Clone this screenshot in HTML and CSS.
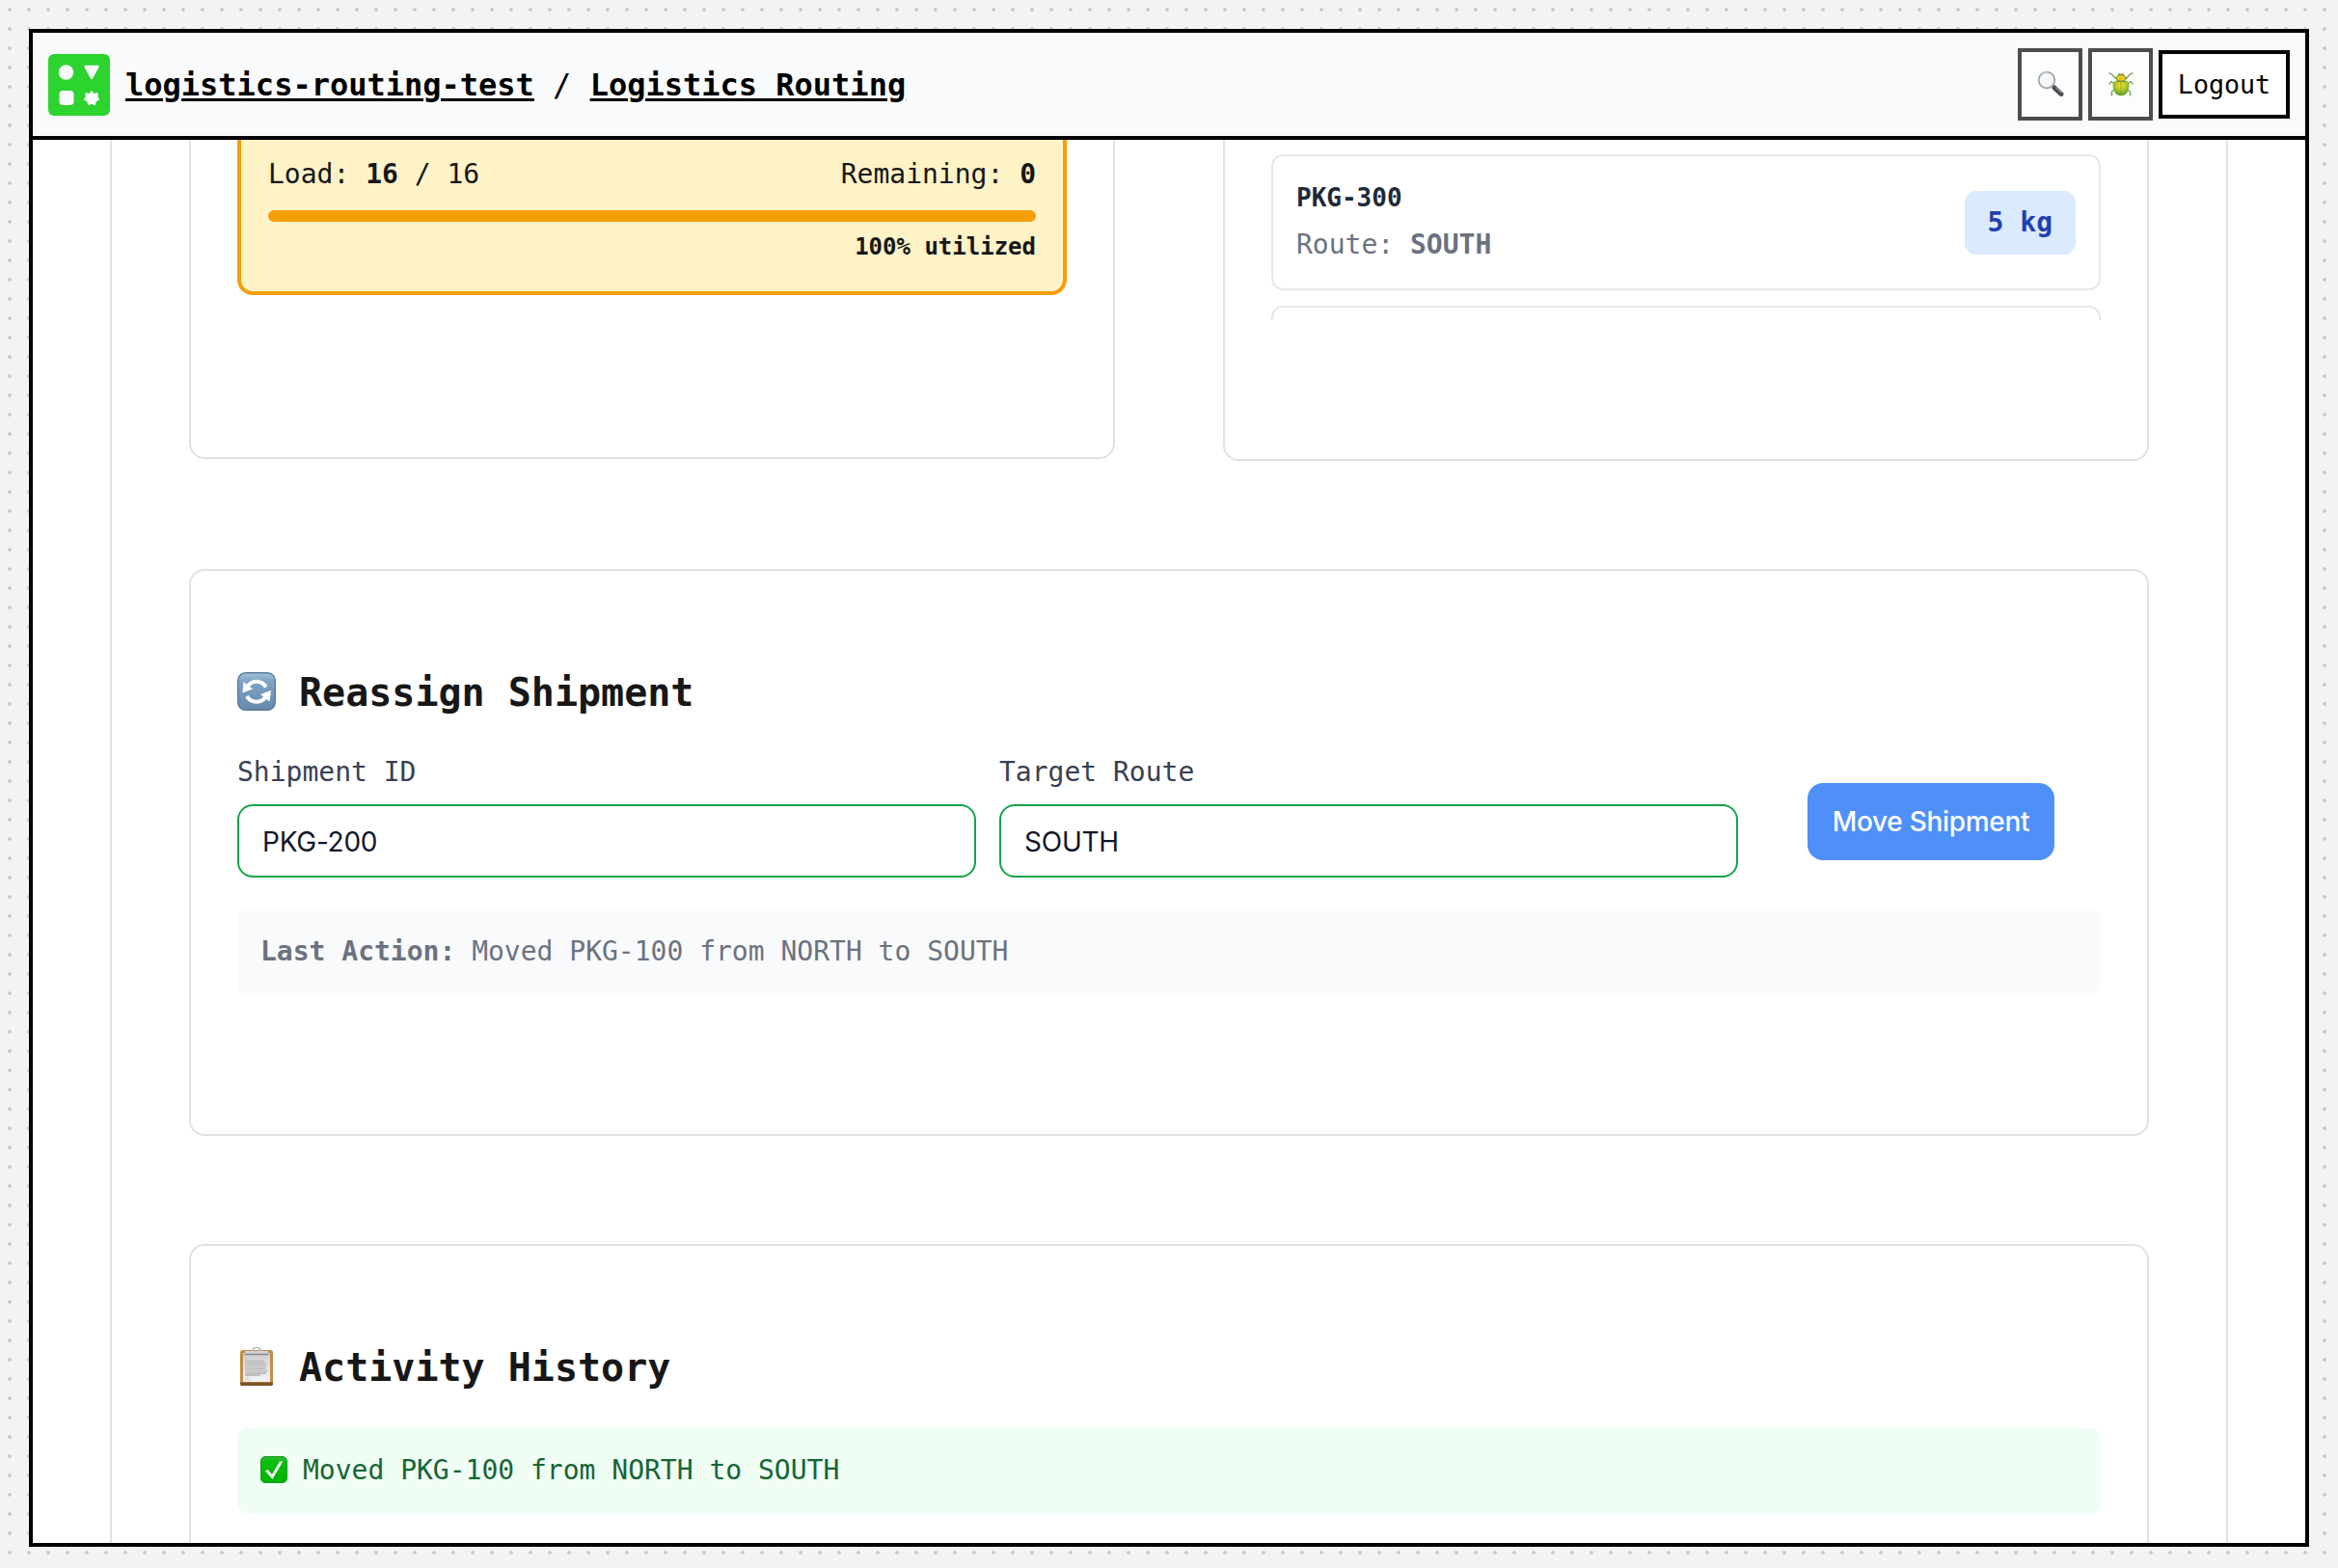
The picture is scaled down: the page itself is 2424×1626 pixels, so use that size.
FILE: index.html
```html
<!DOCTYPE html>
<html lang="en">
<head>
<meta charset="utf-8">
<title>Logistics Routing</title>
<link rel="stylesheet" href="styles.css">
</head>
<body>
<div class="frame">
  <header class="topbar">
    <svg class="logo" viewBox="0 0 64 64">
      <rect width="64" height="64" rx="6" fill="#2dd42f"/>
      <g fill="#f9fafc">
        <circle cx="18.5" cy="19" r="7.7"/>
        <path d="M38.6 13H51.4L45 25Z" stroke="#f9fafc" stroke-width="2.5" stroke-linejoin="round"/>
        <rect x="11.5" y="38" width="15" height="15" rx="4"/>
        <path d="M45 38.4L47.4 41.5L51.1 40.6L51.1 44.3L52.6 47.2L49.3 49L48.3 52.8L45 51.3L41.7 52.8L40.7 49L37.4 47.2L39.2 44.3L38.9 40.6L42.6 41.5Z" stroke="#f9fafc" stroke-width="1" stroke-linejoin="round"/>
      </g>
    </svg>
    <nav class="crumbs"><a>logistics-routing-test</a><span> / </span><a>Logistics Routing</a></nav>
    <div class="actions">
      <button class="icon-btn" aria-label="Search">
        <svg width="28" height="28" viewBox="0 0 28 28">
          <path d="M18 18L25 24.5" stroke="#454950" stroke-width="5" stroke-linecap="round"/>
          <path d="M19.5 17.8L25.3 23" stroke="#92969d" stroke-width="1.2" stroke-linecap="round"/>
          <circle cx="10" cy="10" r="8.3" fill="#f5f6f8" stroke="#9da3aa" stroke-width="1.7"/>
          <path d="M3.6 6.8A7.6 7.6 0 0 1 11 2.2" fill="none" stroke="#bfd3e6" stroke-width="1.2"/>
        </svg>
      </button>
      <button class="icon-btn" aria-label="Bugs">
        <svg width="28" height="28" viewBox="0 0 28 28">
          <defs><radialGradient id="shell" cx=".5" cy=".3" r=".7"><stop offset="0" stop-color="#f6dc25"/><stop offset=".45" stop-color="#b9cb2b"/><stop offset="1" stop-color="#4b9b2b"/></radialGradient></defs>
          <path d="M10 9C5 7 7 4 2 3M18 9C23 7 21 4 26 3M6 13L4 11.5L2 14M22 13L24 11.5L26 14M7 20L4.500 22L4.500 26M21 20L23.500 22L23.500 26" fill="none" stroke="#83a56b" stroke-width="1.5" stroke-linecap="round" stroke-linejoin="round"/>
          <path d="M11 6L11.500 3L14 4L16.500 3L17 6Z" fill="#578a27"/>
          <ellipse cx="14" cy="8" rx="5" ry="3.600" fill="#e6c71d" stroke="#57912a" stroke-width="1"/>
          <path d="M6 15C6 11 9 11 14 11S22 11 22 15C22 22 19 26 14 26S6 22 6 15Z" fill="url(#shell)" stroke="#73a52f" stroke-width=".7"/>
          <path d="M9 11.300H19" stroke="#5f8a22" stroke-width=".9"/>
          <path d="M14 11V25.500" stroke="#8f9920" stroke-width=".8"/>
        </svg>
      </button>
      <button class="logout">Logout</button>
    </div>
  </header>
  <main class="page">
    <div class="columns">
      <section class="card routes">
        <div class="route">
          <div class="route-row"><span>Load: <b>16</b> / 16</span><span>Remaining: <b>0</b></span></div>
          <div class="bar"></div>
          <div class="utilized">100% utilized</div>
        </div>
      </section>
      <section class="card packages">
        <div class="package-list">
          <div class="package">
            <div>
              <div class="package-id">PKG-300</div>
              <div class="package-route">Route: <b>SOUTH</b></div>
            </div>
            <span class="weight">5 kg</span>
          </div>
          <div class="package"></div>
        </div>
      </section>
    </div>
    <section class="card reassign">
      <h2>
        <svg width="40" height="40" viewBox="0 0 40 40">
          <defs><linearGradient id="blue" x2="0" y2="1"><stop offset="0" stop-color="#a7c2dc"/><stop offset=".22" stop-color="#7ea4c6"/><stop offset="1" stop-color="#6689aa"/></linearGradient></defs>
          <rect x=".7" y=".7" width="38.600" height="38.600" rx="8" fill="url(#blue)" stroke="#587c9d" stroke-width="1.400"/>
          <path d="M9.500 17.500C13 7.500 25 7.500 29.800 15.500M30.500 23C27 33 14.500 33 10 25" fill="none" stroke="#fff" stroke-width="4"/>
          <path d="M6.500 10L5.500 21.500L16 17.500ZM33.500 30.500L35 19L24 23Z" fill="#fff"/>
        </svg>
        Reassign Shipment
      </h2>
      <form class="form">
        <label>Shipment ID<input type="text" value="PKG-200"></label>
        <label>Target Route<input type="text" value="SOUTH"></label>
        <button type="button" class="move">Move Shipment</button>
      </form>
      <div class="last"><b>Last Action:</b> Moved PKG-100 from NORTH to SOUTH</div>
    </section>
    <section class="card history">
      <h2>
        <svg width="40" height="40" viewBox="0 0 40 40">
          <defs><linearGradient id="paper" x2="0" y2="1"><stop offset="0" stop-color="#cfcfcf"/><stop offset="1" stop-color="#f4f4f4"/></linearGradient></defs>
          <rect x="3" y="3" width="34" height="37" rx="2.500" fill="#c18d43"/>
          <path d="M3 36.500H37V38A2 2 0 0 1 35 40H5A2 2 0 0 1 3 38Z" fill="#7b5428"/>
          <rect x="6" y="6" width="28" height="30" fill="url(#paper)"/>
          <path d="M8 11.500H12M8 32H12M8 34H15" stroke="#c4c4c4" stroke-width=".8"/>
          <path d="M8 14.500H28M8 17H30M8 19.500H30M8 22H29M8 24.500H31M8 27H30M8 29H24" stroke="#c0c0c0" stroke-width="2.100"/>
          <path d="M16 4A4 4 0 0 1 24 4" fill="none" stroke="#aebdca" stroke-width="2"/>
          <path d="M8 4H32V7H8Z" fill="#cfd2d9"/><path d="M7.500 7.500H32.500" stroke="#8c8787" stroke-width="1.500"/>
        </svg>
        Activity History
      </h2>
      <div class="event">
        <svg width="28" height="28" viewBox="0 0 28 28">
          <defs><linearGradient id="green" x2="0" y2="1"><stop offset="0" stop-color="#39b53a"/><stop offset=".2" stop-color="#08bf0d"/><stop offset="1" stop-color="#00b400"/></linearGradient></defs>
          <rect x=".5" y=".5" width="27" height="27" rx="4.500" fill="url(#green)" stroke="#189c20"/>
          <path d="M4.800 15.200L7.800 14L12 19L20 5.500H23.200L12.500 24Z" fill="#fff"/>
        </svg>
        Moved PKG-100 from NORTH to SOUTH
      </div>
    </section>
  </main>
</div>
</body>
</html>
```
FILE: styles.css
```css
* { box-sizing: border-box; }
body {
  margin: 0;
  height: 1626px;
  padding: 30px 30px 22px;
  overflow: hidden;
  background: #f3f3f3 radial-gradient(circle at 10px 10px, #ccc 2px, transparent 2px) 0 0 / 20px 20px;
  font: 28px/42px "DejaVu Sans Mono", monospace;
  color: #171717;
}
.frame {
  display: flex;
  flex-direction: column;
  height: 1574px;
  border: 4px solid #000;
  background: #fff;
  overflow: hidden;
}
.topbar {
  display: flex;
  align-items: center;
  flex: none;
  height: 111px;
  padding: 0 16px;
  gap: 16px;
  border-bottom: 4px solid #000;
  background: #f9fafc;
  color: #000;
}
.logo { width: 64px; height: 64px; margin-top: 1px; }
.crumbs { font-size: 32px; white-space: pre; margin-top: 1px; }
.crumbs a {
  font-weight: 700;
  text-decoration: underline;
  text-decoration-thickness: 3px;
  text-underline-offset: 3px;
}
.actions { display: flex; align-items: center; gap: 6px; margin-left: auto; }
button { font: inherit; margin: 0; padding: 0; }
.icon-btn {
  display: flex;
  align-items: center;
  justify-content: center;
  width: 67px;
  height: 75px;
  border: 4px solid #4d4d4d;
  background: #fdfdfd;
}
.icon-btn svg { margin-bottom: 1px; }
.logout {
  width: 136px;
  height: 71px;
  border: 4px solid #000;
  background: #fff;
  color: #000;
  font-size: 26.67px;
}
.page {
  flex: none;
  display: flex;
  flex-direction: column;
  gap: 112px;
  margin: 0 80px;
  padding: 0 80px;
  border: solid #e2e2e2;
  border-width: 0 2px;
}
.columns { display: flex; justify-content: space-between; align-items: flex-start; }
.card { padding: 96px 48px; border: 2px solid #e2e2e2; border-radius: 16px; }
.routes, .packages { width: 960px; padding-top: 0; border-top: 0; border-radius: 0 0 16px 16px; }
.routes { height: 331px; }
.packages { height: 333px; }
.route {
  height: 161px;
  padding: 15px 28px 0;
  border: 4px solid #f59e0b;
  border-top: 0;
  border-radius: 0 0 16px 16px;
  background: #fef3c7;
}
.route-row { display: flex; justify-content: space-between; }
.bar { height: 12px; margin: 16px 0 8px; border-radius: 6px; background: #f59e0b; }
.utilized { font-size: 24px; font-weight: 700; line-height: 36px; text-align: right; }
.package-list {
  display: flex;
  flex-direction: column;
  gap: 16px;
  height: 187px;
  padding-top: 15px;
  overflow: hidden;
}
.package {
  display: flex;
  align-items: center;
  justify-content: space-between;
  flex: none;
  height: 141px;
  padding: 0 24px;
  border: 2px solid #e5e7eb;
  border-radius: 12px;
}
.package-id { font-size: 26px; font-weight: 700; line-height: 39px; margin-bottom: 8px; color: #1f2937; }
.package-route { color: #6b7280; }
.weight {
  padding: 12px 24px;
  border-radius: 12px;
  background: #dbeafe;
  color: #1e40af;
  font-weight: 700;
}
.reassign { height: 588px; }
.history { height: 480px; }
h2 {
  display: flex;
  align-items: center;
  gap: 24px;
  margin: 0 0 32px;
  font-size: 40px;
  line-height: 60px;
}
h2 svg { margin-bottom: 2px; }
.form { display: grid; grid-template-columns: 766px 766px 1fr; column-gap: 24px; }
.form label { color: #374151; }
.form input {
  display: block;
  width: 100%;
  height: 76px;
  margin: 12px 0 0;
  padding: 1px 24px 0;
  border: 2px solid #16a34a;
  border-radius: 16px;
  background: #fff;
  color: #0f172a;
  font: 28px/42px Inter, sans-serif;
  letter-spacing: -0.25px;
}
.move {
  align-self: end;
  justify-self: center;
  width: 256px;
  height: 80px;
  margin-bottom: 18px;
  border: 0;
  border-radius: 16px;
  background: #4f8ff8;
  color: #fff;
  font: 500 28px/42px Inter, sans-serif;
  letter-spacing: -0.3px;
}
.last, .event { height: 90px; padding: 24px; border-radius: 12px; }
.last { margin-top: 32px; background: #f9fafc; color: #6b7280; }
.event { display: flex; align-items: center; gap: 16px; background: #f0fdf4; color: #166534; }
.event svg { margin-bottom: 3px; }
```
